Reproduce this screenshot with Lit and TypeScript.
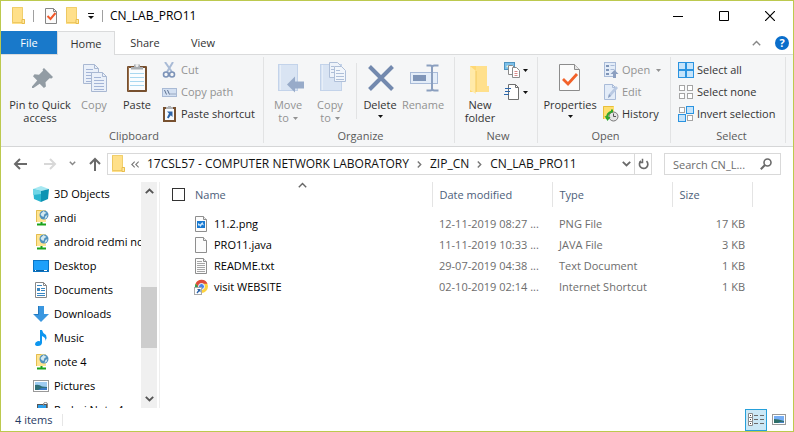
import { LitElement, html, css, svg, nothing } from "lit";
import type { TemplateResult } from "lit";
import { customElement } from "lit/decorators.js";
import { classMap } from "lit/directives/class-map.js";

const icon = (w: number, h: number, body: TemplateResult) =>
  html`<svg class="icon" width=${w} height=${h} viewBox="0 0 ${w} ${h}" aria-hidden="true">${body}</svg>`;

const folderShape = svg`<path d="M1 0h11v12h2v5H1z" fill="#ffe08a"/><path d="M1.500 .5h10v11.500" fill="none" stroke="#f0cf6c"/><path d="M1.500 .5V15.500h10" fill="none" stroke="#edc862"/><path d="M11 12.500h2.500v4H11z" fill="#ffe8a2" stroke="#e8bd4c"/>`;
const folder = () => icon(16, 18, folderShape);

const check = () => icon(16, 18, svg`
  <path d="M2.500 1.500h8l3 3v12h-11z" fill="#fbfbfb" stroke="#858585"/><path d="M10.500 1.500v3h3" fill="none" stroke="#858585"/>
  <path d="M4.500 9l3 3 5-6" fill="none" stroke="#f0592b" stroke-width="2"/>`);

const caret = () => icon(5, 3, svg`<path d="M0 0h5L2.500 3z" fill="currentColor"/>`);

const pin = () => icon(32, 32, svg`
  <path d="M20 6l9 9-1.500 1.500-2-.3-4 4 .4 4.300-2 1.500-4.200-4.200L9.500 26H8v-1.500l5.200-6L9 14.300l1.500-2 4.500.5 4-4-.4-1.600z" fill="#929ca4"/>`);

const sheet = (x: number, y: number) => svg`
  <path d="M${x + 0.5} ${y + 0.5}h11l4 4v15h-15z" fill="#eaf0f9" stroke="#a9b8d2"/>
  <path d="M${x + 11.5} ${y + 0.5}v4h4" fill="none" stroke="#a9b8d2"/>
  <path d="M${x + 3} ${y + 5.5}h7M${x + 3} ${y + 8.500}h10M${x + 3} ${y + 11.500}h10M${x + 3} ${y + 14.500}h10M${x + 3} ${y + 17.500}h10" stroke="#a3b4d6"/>`;
const copy = () => icon(32, 32, svg`${sheet(5, 2)}${sheet(13, 10)}`);

const paste = () => icon(32, 32, svg`
  <rect x="6" y="4" width="20" height="26" rx="1" fill="#77502f"/><path d="M7.500 5v24" stroke="#996e49"/>
  <rect x="8" y="6" width="16" height="22" fill="#fafdff"/>
  <path d="M9 11.500h14M9 15.500h14M9 19.500h14M9 23.500h14" stroke="#a9d8f0"/>
  <path d="M10 7.500V5h3V2.500h6V5h3v2.500z" fill="#a9adb1"/><circle cx="16" cy="3.500" r="1.500" fill="#eee"/>`);

const scissors = () => icon(16, 16, svg`
  <path d="M3 0l7 10M11 0L5 10" stroke="#a9bbd6" stroke-width="2" fill="none"/>
  <circle cx="4" cy="12.500" r="2.500" fill="none" stroke="#7c93b8" stroke-width="1.600"/><circle cx="10" cy="12.500" r="2.500" fill="none" stroke="#7c93b8" stroke-width="1.600"/>`);
const pathIcon = () => icon(16, 16, svg`
  <rect x=".5" y="4.500" width="14" height="8" fill="#d3e0f2" stroke="#a9bad5"/>
  <path d="M2.500 6l2 4.500M5.500 6l2 4.500" stroke="#5f7392"/><path d="M8.500 10h1M10.500 10h1M12.500 10h1" stroke="#5f7392"/>`);
const shortcut = () => icon(16, 16, svg`
  <rect x="1" y="1" width="13" height="15" fill="#77502f"/><rect x="3" y="3" width="9" height="11" fill="#f6fbff"/>
  <path d="M4 3V1h2V0h3v1h2v2z" fill="#b1b4b8"/><path d="M5 5.500h5.500V11L8.800 9.300 6.500 12.500 5 11.500 7 7.500z" fill="#2e64a8"/>`);

const moveTo = () => icon(32, 32, svg`
  <rect x="6.500" y="2.500" width="19" height="26" fill="#d9e4f3" stroke="#c3d3ea"/><path d="M8.500 3v25" stroke="#e8eff8"/>
  <path d="M15 22.500l8-8v5h9v7h-9v4z" fill="#98abc9"/>`);
const copyTo = () => icon(32, 32, svg`
  <rect x="6.500" y="2.500" width="21" height="26" fill="#d9e4f3" stroke="#c3d3ea"/><path d="M8.500 3v25" stroke="#e8eff8"/>
  <path d="M15.500 .5h8l3 3v12h-11z" fill="#eef3fa" stroke="#afbfd8"/>
  <path d="M20.500 4.500h7l4 4v11h-11z" fill="#f2f6fb" stroke="#afbfd8"/>
  <path d="M17 4.500h3M17 7.500h3M17 10.500h3M22 8.500h4M22 11.500h8M22 14.500h8M22 17.500h8" stroke="#afbfd8"/>`);
const cross = () => icon(32, 32, svg`<path d="M5.500 4.500l23 23M28.500 4.500l-23 23" stroke="#7389ae" stroke-width="4"/>`);
const rename = () => icon(32, 32, svg`
  <rect x="3.500" y="10.500" width="27" height="11" fill="#e4edf8" stroke="#a9bbd8"/><rect x="6" y="13" width="13" height="6" fill="#7f95b8"/>
  <path d="M19.500 3.500h4q1.500 0 1.500 2v21q0 2-1.500 2h-4M31.500 3.500h-4Q25 3.500 25 5.500M31.500 28.500h-4q-2.500 0-2.500-2" fill="none" stroke="#8b9fbf" stroke-width="2"/>`);
const newFolder = () => icon(32, 32, svg`
  <path d="M6 4h17v20h2v6H6z" fill="#ffd874"/><path d="M12 4h11v20h2v6H12z" fill="#ffe08c"/><path d="M6 4l6 5v23l-6-4z" fill="#ffeaa9"/><path d="M12 9v21" stroke="#f2c85d"/>`);

const newItem = () => icon(17, 16, svg`
  <rect x=".5" y=".5" width="10" height="7" fill="#7cc0ea" stroke="#4e93bf"/><path d="M2 5l2-2 3 3z" fill="#e7f6dc"/>
  <path d="M4.500 3.500h4l3 3v6h-7z" fill="#fff" stroke="#8a8a8a"/><path d="M8.500 5.500h4l3 3v7h-7z" fill="#fff" stroke="#8a8a8a"/><path d="M10.500 9.500h3M10.500 11.500h3M10.500 13.500h3" stroke="#d98a8a"/>`);
const easyAccess = () => icon(17, 16, svg`
  <path d="M4.500 .5h7l3 3v12h-10z" fill="#fff" stroke="#6f6f6f"/><path d="M11.500 .5v3h3" fill="none" stroke="#6f6f6f"/>
  <path d="M1 4.500h6M1 7.500h5M0 10.500h5" stroke="#2d68ac"/>`);

const properties = () => icon(32, 32, svg`
  <path d="M5.500 2.500h15l5 5v21h-20z" fill="#fbfbfb" stroke="#8c8c8c"/><path d="M20.500 2.500v5h5" fill="#e6e6e6" stroke="#8c8c8c"/>
  <path d="M9 17l5 5 9-10" fill="none" stroke="#f2622a" stroke-width="2.800"/>`);
const openIcon = () => icon(16, 16, svg`
  <rect x="1.500" y=".5" width="11" height="14" fill="#e3ecf8" stroke="#a9bbd8"/>
  <path d="M3 3h3v2H3zM3 7h3v2H3zM3 11h3v2H3z" fill="#7f95b8"/><path d="M7.500 3.500h4M7.500 7.500h4" stroke="#a9bbd8"/>
  <path d="M11.500 8l4 4h-2.500v4h-3v-4H7.500z" fill="#8b9fc0"/>`);
const edit = () => icon(16, 16, svg`
  <path d="M1.500 .5h8l3 3v12h-11z" fill="#e3ecf8" stroke="#a9bbd8"/><path d="M9.500 .5v3h3" fill="none" stroke="#a9bbd8"/>
  <path d="M5 14l1-4 7-8 2 2-7 8z" fill="#b9c9e2"/><path d="M5 14l1-4 2 2z" fill="#8b9fc0"/>`);
const history = () => icon(16, 16, svg`
  <rect x="0" y="0" width="11" height="13" fill="#ffdf6e"/><path d="M.5 13V.5h10" fill="none" stroke="#e8be3c"/>
  <circle cx="10.500" cy="10.500" r="4.500" fill="#e4e4e4" stroke="#777"/><path d="M10.500 7.500v3h2.500" fill="none" stroke="#555"/>
  <path d="M4 13Q3.500 7 9 5.500V3.500" fill="none" stroke="#2ea62e" stroke-width="2"/><path d="M1.500 10l3 5 3-4z" fill="#2ea62e"/>`);

const cell = (x: number, y: number, on: boolean) => on
  ? svg`<rect x=${x + 0.5} y=${y + 0.5} width="7" height="7" fill="#c5e4fb" stroke="#2a93e0"/>`
  : svg`<rect x=${x + 1.5} y=${y + 1.5} width="5" height="5" fill="#fff" stroke="#a5a5a5"/>`;
const cells = (a: boolean, b: boolean, c: boolean, d: boolean) =>
  icon(16, 16, svg`${cell(0, 0, a)}${cell(8, 0, b)}${cell(0, 8, c)}${cell(8, 8, d)}`);

const arrow = (d: string) => icon(14, 14, svg`<path d=${d} fill="none" stroke="currentColor" stroke-width="2"/>`);
const chevronDown = () => icon(9, 6, svg`<path d="M.8 .8l3.700 3.700L8.200 .8" fill="none" stroke="currentColor" stroke-width="1.800"/>`);
const chevronUp = () => icon(9, 6, svg`<path d="M.8 5.200l3.700-3.700 3.700 3.700" fill="none" stroke="currentColor" stroke-width="1.400"/>`);
const chevronRight = () => icon(5, 7, svg`<path d="M.8 .6l2.900 2.900L.8 6.400" fill="none" stroke="currentColor" stroke-width="1.400"/>`);
const chevronsLeft = () => icon(8, 7, svg`<path d="M3.700 .6L.8 3.500l2.900 2.900M7.700 .6L4.800 3.500l2.900 2.900" fill="none" stroke="currentColor" stroke-width="1.100"/>`);

const objects3d = () => icon(16, 16, svg`
  <path d="M0 3l8-3 8 3-8 2z" fill="#a6e8f2"/><path d="M0 3l8 2v11l-7-3z" fill="#29b5cf"/><path d="M16 3L8 5v11l7-3z" fill="#0c93b3"/><path d="M0 3l8 2v3L0 9z" fill="#6fd6e6"/>`);
const netDrive = () => icon(16, 16, svg`
  <path d="M3 0h10v12H3z" fill="#ffe492"/><path d="M3.500 12V.5h5" fill="none" stroke="#e3bd50"/>
  <circle cx="11" cy="5" r="4.500" fill="#4f91bd"/><path d="M7.500 4l3-3 3 2-2 1-1 3-2-1zM12.500 6l2-1-1 3-2 1z" fill="#d4e9f0"/>
  <path d="M8.500 12v2.500M4 14.500h9" stroke="#1da31d" stroke-width="2"/>`);
const desktop = () => icon(16, 16, svg`
  <rect x=".5" y="2.500" width="15" height="11" fill="#1ea0fa" stroke="#0a74c4"/><path d="M1 12.500h14" stroke="#0d5f9e"/><path d="M2 12.500h1M11 12.500h3" stroke="#fff"/>`);
const documents = () => icon(16, 16, svg`
  <path d="M2.500 .5h8l3 3v12h-11z" fill="#fff" stroke="#888"/><path d="M10.500 .5v3h3" fill="none" stroke="#888"/>
  <path d="M4 3.500h5M8 6.500h4M8 8.500h4M4 11.500h8M4 13.500h8" stroke="#3a87c2"/><path d="M4 6h3v3H4z" fill="#3a87c2"/>`);
const downloads = () => icon(16, 16, svg`<path d="M5 0h6v8h5l-8 8-8-8h5z" fill="#3a97e0"/><path d="M5.500 0v8.500H1.500" fill="none" stroke="#2478bd"/>`);
const music = () => icon(16, 16, svg`<path d="M7 0h2q.5 3 4 5 1.500 3-.5 6 .5-3.500-3.500-5v7q-.5 3-4 3-3 0-3-2t3-3q1 0 2 .3z" fill="#0d96ef"/>`);
const picture = () => icon(16, 16, svg`
  <rect x=".5" y="2.500" width="15" height="11" fill="#fff" stroke="#999"/><rect x="2" y="4" width="12" height="8" fill="#9fcdf2"/>
  <path d="M2 7q4-1 7 1.500l5 .5v3H2z" fill="#2f6f78"/><path d="M5 12q4-3 9-2v2z" fill="#3c7cc8"/>`);
const phone = () => icon(16, 16, svg`
  <rect x="4.500" y="2.500" width="9" height="13" fill="#2aa0ee" stroke="#555"/><path d="M10.500 4V2q0-1.500 2-1.500T14.500 2v6" fill="none" stroke="#8a8a8a"/>`);

const page = (inner: TemplateResult) => icon(14, 16, svg`
  <path d="M1.500 .5h8l3 3v12h-11z" fill="#fcfcfc" stroke="#8e8e8e"/><path d="M9.500 .5v3h3" fill="#eee" stroke="#8e8e8e"/>${inner}`);
const pngFile = () => page(svg`<rect x="3" y="5" width="8" height="7" fill="#1878d0"/><path d="M4 10V7l2 1.500L8.500 6 10 9.500 8 8.500 6.500 11 5 9z" fill="#cfe8fb"/>`);
const blankFile = () => page(svg``);
const textFile = () => page(svg`<path d="M3 3.500h5M3 5.500h8M3 7.500h8M3 9.500h8M3 11.500h8M3 13.500h8" stroke="#a6a6a6"/>`);
const chrome = () => icon(14, 16, svg`
  <circle cx="7.500" cy="7.500" r="6.500" fill="#fdd23e"/><path d="M1.700 4.500A6.500 6.500 0 0 1 13.500 4.800H7.500L4.500 9.200z" fill="#de4b3b"/>
  <path d="M1.700 4.500L6 11l1.500 3A6.500 6.500 0 0 1 1.700 4.500z" fill="#2f9e52"/><circle cx="7.500" cy="7.500" r="3" fill="#4a86ea" stroke="#fff"/>
  <rect x=".5" y="8.500" width="7" height="7" fill="#fff" stroke="#aaa"/><path d="M3 10h3.500v3.500L5.300 12.300 3.500 14.500l-1-1 1.700-2.300z" fill="#2b62a8"/>`);

interface Tool { icon: () => TemplateResult; label: string; off?: boolean; menu?: boolean }

const clipboardSmall: Tool[] = [
  { icon: scissors, label: "Cut", off: true },
  { icon: pathIcon, label: "Copy path", off: true },
  { icon: shortcut, label: "Paste shortcut" },
];
const openSmall: Tool[] = [
  { icon: openIcon, label: "Open", off: true, menu: true },
  { icon: edit, label: "Edit", off: true },
  { icon: history, label: "History" },
];
const selectSmall: Tool[] = [
  { icon: () => cells(true, true, true, true), label: "Select all" },
  { icon: () => cells(false, false, false, false), label: "Select none" },
  { icon: () => cells(false, true, true, false), label: "Invert selection" },
];

const places: [() => TemplateResult, string][] = [
  [objects3d, "3D Objects"], [netDrive, "andi"], [netDrive, "android redmi note"], [desktop, "Desktop"],
  [documents, "Documents"], [downloads, "Downloads"], [music, "Music"], [netDrive, "note 4"],
  [picture, "Pictures"], [phone, "Redmi Note 4"],
];

const files: [() => TemplateResult, string, string, string, string][] = [
  [pngFile, "11.2.png", "12-11-2019 08:27 ...", "PNG File", "17 KB"],
  [blankFile, "PRO11.java", "11-11-2019 10:33 ...", "JAVA File", "3 KB"],
  [textFile, "README.txt", "29-07-2019 04:38 ...", "Text Document", "1 KB"],
  [chrome, "visit WEBSITE", "02-10-2019 02:14 ...", "Internet Shortcut", "1 KB"],
];

const base = css`
  * { box-sizing: border-box; }
  button, input { font: inherit; color: inherit; margin: 0; padding: 0; border: 0; background: none; border-radius: 0; }
  a { color: inherit; text-decoration: none; }
  .icon { display: block; flex: none; }
`;

@customElement("title-bar")
class TitleBar extends LitElement {
  static styles = [base, css`
    :host { display: flex; align-items: center; height: 30px; padding-left: 10px; }
    .bar { width: 1px; height: 12px; background: #a0a0a0; margin: 0 6px; }
    .quick { display: flex; gap: 6px; margin: 0 6px 0 3px; }
    .title { flex: 1; color: #000; margin: 0 0 0 1px; font-size: 12px; font-weight: 400; }
    .window { width: 46px; height: 30px; display: grid; place-items: center; }
  `];
  render() {
    return html`
      ${folder()}<span class="bar"></span>
      <div class="quick">
        <button aria-label="Properties">${check()}</button>
        <button aria-label="New folder">${folder()}</button>
      </div>
      <button aria-label="Customize toolbar">${icon(9, 8, svg`<path d="M1 1.500h6" stroke="#111"/><path d="M1 4h6L4 7z" fill="#111"/>`)}</button>
      <span class="bar"></span>
      <h1 class="title">CN_LAB_PRO11</h1>
      <button class="window" aria-label="Minimize">${icon(10, 10, svg`<path d="M0 5.500h10" stroke="#000"/>`)}</button>
      <button class="window" aria-label="Maximize">${icon(10, 10, svg`<path d="M.5 .5h9v9h-9z" fill="none" stroke="#000"/>`)}</button>
      <button class="window" aria-label="Close">${icon(10, 10, svg`<path d="M0 0l10 10M10 0L0 10" stroke="#000" stroke-width="1.200"/>`)}</button>`;
  }
}

@customElement("ribbon-bar")
class RibbonBar extends LitElement {
  static styles = [base, css`
    :host { display: block; }
    .tabs { display: flex; height: 24px; border-bottom: 1px solid #dadbdc; }
    .tab { height: 23px; width: 56px; color: #333; }
    .file { background: #1979ca; color: #fff; }
    .current { height: 24px; width: 58px; background: #f5f6f7; border: 1px solid #dadbdc; border-bottom: 0; }
    .share { width: 60px; }
    .end { margin-left: auto; display: flex; align-items: center; gap: 14px; padding-right: 4px; color: #888; }
    .help { width: 14px; height: 14px; border-radius: 50%; background: #0a6ecb; color: #fff; font-weight: 700; line-height: 14px; }
    .groups { display: flex; height: 92px; padding-top: 2px; background: #f5f6f7; border-bottom: 1px solid #d5d6d7; }
    .group { flex: none; display: flex; flex-direction: column; height: 86px; border-right: 1px solid #e2e3e4; }
    .clipboard { width: 263px; padding-left: 4px; }
    .organize { width: 191px; padding-left: 3px; }
    .new { width: 83px; padding-left: 4px; }
    .open { width: 133px; padding-left: 3px; }
    .select { width: 115px; padding-left: 7px; }
    .body { display: flex; height: 72px; padding-top: 2px; }
    .name { margin: 0; text-align: center; color: #5a5a5a; line-height: 14px; font-size: inherit; font-weight: 400; }
    .large { display: flex; flex-direction: column; align-items: center; padding-top: 3px; line-height: 13px; color: #333; white-space: nowrap; }
    .large .text { margin-top: 4px; }
    .w38 { width: 38px; } .w42 { width: 42px; } .w48 { width: 48px; } .w58 { width: 58px; } .w70 { width: 70px; }
    .large .under { margin-top: 4px; color: #111; }
    .text .icon { display: inline-block; margin-left: 4px; vertical-align: 2px; }
    .large.off { color: #929292; }
    .rule { width: 1px; height: 56px; margin: 4px 4px 0 5px; background: #e2e3e4; }
    .column { display: flex; flex-direction: column; align-items: flex-start; }
    .open .column { margin-left: 3px; }
    .small { display: flex; align-items: center; gap: 3px; height: 22px; padding-left: 1px; color: #333; white-space: nowrap; }
    .small.off { color: #929292; }
    .select .small { padding-left: 0; }
    .small .menu { margin-left: 3px; }
    .new .small { gap: 2px; padding-left: 3px; color: #111; }
  `];
  private large(draw: () => TemplateResult, width: string, first: string, second: string, off = false, menu = false) {
    return html`<button class=${classMap({ large: true, [width]: true, off })}>${draw()}
      <span class="text">${first}${second ? html`<br>${second}${menu ? caret() : nothing}` : nothing}</span>
      ${menu && !second ? html`<span class="under">${caret()}</span>` : nothing}</button>`;
  }
  private column(tools: Tool[]) {
    return html`<div class="column">${tools.map(t => html`
      <button class=${classMap({ small: true, off: !!t.off })}>${t.icon()}<span>${t.label}</span>${t.menu ? html`<span class="menu">${caret()}</span>` : nothing}</button>`)}</div>`;
  }
  render() {
    return html`
      <nav class="tabs">
        <button class="tab file">File</button><button class="tab current">Home</button>
        <button class="tab share">Share</button><button class="tab">View</button>
        <div class="end"><button aria-label="Collapse ribbon">${chevronUp()}</button><button class="help" aria-label="Help">?</button></div>
      </nav>
      <div class="groups">
        <section class="group clipboard"><div class="body">
          ${this.large(pin, "w70", "Pin to Quick", "access")}${this.large(copy, "w38", "Copy", "", true)}${this.large(paste, "w48", "Paste", "")}
          ${this.column(clipboardSmall)}</div><h2 class="name">Clipboard</h2></section>
        <section class="group organize"><div class="body">
          ${this.large(moveTo, "w42", "Move", "to", true, true)}${this.large(copyTo, "w42", "Copy", "to", true, true)}<span class="rule"></span>
          ${this.large(cross, "w38", "Delete", "", false, true)}${this.large(rename, "w48", "Rename", "", true)}</div><h2 class="name">Organize</h2></section>
        <section class="group new"><div class="body">
          ${this.large(newFolder, "w42", "New", "folder")}
          <div class="column"><button class="small" aria-label="New item">${newItem()}${caret()}</button>
          <button class="small" aria-label="Easy access">${easyAccess()}${caret()}</button></div></div><h2 class="name">New</h2></section>
        <section class="group open"><div class="body">
          ${this.large(properties, "w58", "Properties", "", false, true)}${this.column(openSmall)}</div><h2 class="name">Open</h2></section>
        <section class="group select"><div class="body">${this.column(selectSmall)}</div><h2 class="name">Select</h2></section>
      </div>`;
  }
}

@customElement("address-row")
class AddressRow extends LitElement {
  static styles = [base, css`
    :host { display: flex; align-items: center; height: 34px; padding: 0 12px; color: #6a6a6a; }
    .arrows { display: flex; align-items: center; gap: 12px; width: 94px; }
    .forward { color: #d8d8d8; margin-left: 4px; }
    .recent { color: #888; }
    .field { display: flex; align-items: center; height: 22px; border: 1px solid #d9d9d9; }
    .address { flex: 1; min-width: 0; padding-left: 3px; }
    .crumbs { flex: 1; min-width: 0; display: flex; align-items: center; gap: 8px; margin-left: 4px; overflow: hidden; white-space: nowrap; color: #111; font-size: 12px; }
    .crumbs .icon { color: #777; }
    .refresh { display: grid; place-items: center; width: 17px; height: 20px; margin-left: 3px; border-left: 1px solid #d9d9d9; }
    .search { width: 117px; margin-left: 12px; padding: 0 8px; }
    .query { flex: 1; min-width: 0; height: 20px; outline: 0; }
    .query::placeholder { color: #6d6d6d; opacity: 1; }
  `];
  render() {
    return html`
      <div class="arrows">
        <button aria-label="Back">${arrow("M14 7H2M7 2L2 7l5 5")}</button>
        <button class="forward" aria-label="Forward">${arrow("M1 7h11M7 2l5 5-5 5")}</button>
        <button class="recent" aria-label="Recent locations">${icon(7, 6, svg`<path d="M.8 .8l2.700 2.700L6.200 .8" fill="none" stroke="currentColor" stroke-width="1.500"/>`)}</button>
        <button aria-label="Up">${arrow("M7 14V2M2 7l5-5 5 5")}</button>
      </div>
      <div class="field address">
        ${folder()}
        <div class="crumbs">
          ${chevronsLeft()}<button>17CSL57 - COMPUTER NETWORK LABORATORY</button>${chevronRight()}
          <button>ZIP_CN</button>${chevronRight()}<button>CN_LAB_PRO11</button>
        </div>
        <button aria-label="Previous locations">${chevronDown()}</button>
        <button class="refresh" aria-label="Refresh">${icon(11, 12, svg`<path d="M8.500 3.200A4.200 4.200 0 1 1 3 3" fill="none" stroke="currentColor" stroke-width="1.700"/><path d="M4.500 .8v3.700H1" fill="none" stroke="currentColor" stroke-width="1.500"/>`)}</button>
      </div>
      <div class="field search">
        <input class="query" type="text" placeholder="Search CN_L..." aria-label="Search CN_LAB_PRO11">
        ${icon(12, 12, svg`<circle cx="7.500" cy="4.500" r="3.500" fill="none" stroke="currentColor" stroke-width="1.600"/><path d="M5 7L.8 11.200" stroke="currentColor" stroke-width="2"/>`)}
      </div>`;
  }
}

@customElement("places-pane")
class PlacesPane extends LitElement {
  static styles = [base, css`
    :host { display: flex; overflow: hidden; border-right: 1px solid #eee; padding-right: 2px; }
    .list { flex: 1; min-width: 0; height: 0; min-height: 100%; margin: 0; padding: 0 0 0 32px; list-style: none; overflow: hidden; }
    .place { display: flex; align-items: center; gap: 5px; height: 24px; white-space: nowrap; color: #000; }
    .scroll { width: 16px; display: flex; flex-direction: column; align-items: center; background: #f0f0f0; color: #555; padding: 6px 0; }
    .gap { flex: 93; } .thumb { flex: 61; width: 100%; background: #cdcdcd; } .rest { flex: 48; }
  `];
  render() {
    return html`
      <ul class="list">${places.map(([draw, label]) => html`<li><a class="place" href="#">${draw()}<span>${label}</span></a></li>`)}</ul>
      <div class="scroll">${icon(9, 6, svg`<path d="M.8 5.200l3.700-3.700 3.700 3.700" fill="none" stroke="currentColor" stroke-width="1.900"/>`)}
        <span class="gap"></span><span class="thumb"></span><span class="rest"></span>${chevronDown()}</div>`;
  }
}

@customElement("file-list")
class FileList extends LitElement {
  static styles = [base, css`
    :host { display: block; padding-left: 12px; overflow: hidden; }
    .files { width: 100%; table-layout: fixed; border-collapse: collapse; }
    .files th { position: relative; height: 25px; padding: 0 7px; border-right: 1px solid #e4e4e4; text-align: left; font-weight: 400; color: #4c607a; }
    .files th.last { border: 0; }
    .files .namehead { padding: 0; }
    .all { display: flex; align-items: center; gap: 10px; }
    .tick { appearance: none; width: 13px; height: 13px; border: 1px solid #333; background: #fff; }
    .sort { position: absolute; top: 0; left: 50%; margin-left: -4px; color: #666; }
    .date, .type { width: 120px; } .size { width: 80px; } .last { width: 41px; }
    .files td { height: 21px; padding: 0 7px; color: #6d6d6d; white-space: nowrap; overflow: hidden; }
    .files .num { text-align: right; }
    .files .cell { padding-left: 22px; }
    .file { display: flex; align-items: center; gap: 6px; color: #000; }
    .files .spacer td { height: 6px; }
  `];
  render() {
    return html`
      <table class="files">
        <thead><tr>
          <th class="namehead"><span class="sort">${chevronUp()}</span><label class="all"><input class="tick" type="checkbox" aria-label="Select all items"><span>Name</span></label></th>
          <th class="date">Date modified</th><th class="type">Type</th><th class="size">Size</th><th class="last"></th>
        </tr></thead>
        <tbody>
          <tr class="spacer"><td colspan="5"></td></tr>
          ${files.map(([draw, name, date, type, size]) => html`<tr>
            <td class="cell"><a class="file" href="#">${draw()}<span>${name}</span></a></td>
            <td>${date}</td><td>${type}</td><td class="num">${size}</td><td></td></tr>`)}
        </tbody>
      </table>`;
  }
}

@customElement("status-bar")
class StatusBar extends LitElement {
  static styles = [base, css`
    :host { display: flex; align-items: center; height: 23px; padding: 0 5px 0 14px; color: #1f3a63; }
    .count { padding-right: 10px; border-right: 1px solid #e6e6e6; line-height: 12px; }
    .views { margin-left: auto; display: flex; align-items: center; gap: 3px; }
    .view { display: grid; place-items: center; width: 18px; height: 22px; }
    .active { width: 22px; background: #cbe8f6; border: 1px solid #26a0da; }
  `];
  render() {
    return html`
      <span class="count">4 items</span>
      <div class="views">
        <button class="view active" aria-label="Details view">${icon(16, 14, svg`<path d="M.5 .5h4v4h-4zM.5 4.500h4v4h-4zM.5 8.500h4v4h-4z" fill="#fff" stroke="#8a8a8a"/><path d="M2 2.500h1M2 6.500h1M2 10.500h1" stroke="#444"/><path d="M6 2.500h4M12 2.500h4M6 6.500h4M12 6.500h4M6 10.500h4M12 10.500h4" stroke="#6b6b6b"/>`)}</button>
        <button class="view" aria-label="Large icons view">${icon(14, 12, svg`<rect x=".5" y=".5" width="13" height="10" fill="#fff" stroke="#999"/><path d="M2 2h10v7H2z" fill="#76aef5"/><path d="M2 5q4 0 10 2v2H2z" fill="#2f6f68"/><path d="M6 9q3-2 6-1v1z" fill="#4a86c8"/>`)}</button>
      </div>`;
  }
}

@customElement("app-root")
class AppRoot extends LitElement {
  static styles = [base, css`
    :host { box-sizing: border-box; display: flex; flex-direction: column; min-height: 100vh; border: 1px solid #bcc94e; background: #fff; font: 11px/16px "Open Sans", "Noto Sans", sans-serif; }
    .main { flex: 1; display: grid; grid-template-columns: 159px minmax(0, 1fr); margin-top: 1px; }
  `];
  render() {
    return html`<title-bar></title-bar><ribbon-bar></ribbon-bar><address-row></address-row>
      <main class="main"><places-pane></places-pane><file-list></file-list></main>
      <status-bar></status-bar>`;
  }
}
